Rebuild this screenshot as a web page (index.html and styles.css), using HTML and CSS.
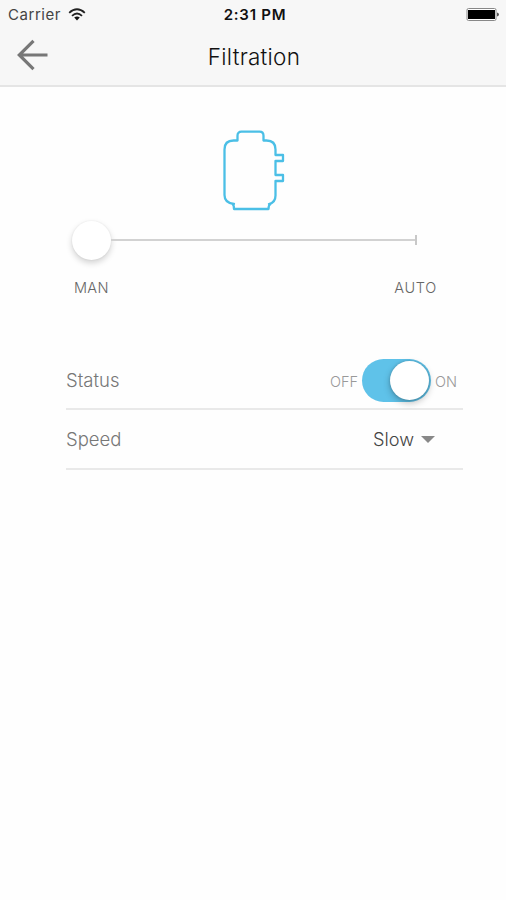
FILE: index.html
```html
<!DOCTYPE html>
<html lang="en">
<head>
<meta charset="utf-8">
<title>Filtration</title>
<link rel="stylesheet" href="styles.css">
</head>
<body>
<header class="header">
  <div class="status-bar">
    <div class="carrier"><span class="carrier-name">Carrier</span>
      <svg class="wifi" width="18" height="13" viewBox="0 0 18 13" fill="none" stroke="#222" stroke-width="1.8"><path d="M1.2 4.8Q9-2.2 16.8 4.8M4 7.8Q9 3.3 14 7.8"/><path d="M6.2 9.6Q9 7.4 11.8 9.6L9 12.4Z" fill="#111" stroke="none"/></svg>
    </div>
    <div class="clock">2:31 PM</div>
    <svg class="battery" width="34" height="13" viewBox="0 0 34 13"><rect x="1" y=".5" width="29" height="12" rx="1.5" fill="#fff" stroke="#888"/><rect x="2" y="2" width="27" height="9" fill="#000"/><path d="M31 4.500q2 .3 2 2t-2 2z" fill="#555"/></svg>
  </div>
  <div class="nav-bar">
    <svg class="back" width="32" height="32" viewBox="0 0 32 32" fill="none" stroke="#777" stroke-width="3.2"><path d="M16.500 1.800 2.300 16 16.500 30.200M2.300 16H30.500"/></svg>
    <h1 class="title">Filtration</h1>
  </div>
</header>
<main class="content">
  <svg class="filter-icon" width="64" height="82" viewBox="0 0 64 82" fill="none" stroke="#4bbfe6" stroke-width="2.3" stroke-linejoin="round"><path d="M15.500 10.500V5.700q0-4 4-4h18q4 0 4 4v4.800h3q9 0 9 9v5.500h7.500v6h-7.500v14h7.500v6h-7.500v14.500q0 7-6.500 8.500l1.500 0q-2 1-2 5H12q0-4-1.500-5l1.500 0q-9.500-1-9.500-9V19.500q0-9 9-9z"/></svg>
  <div class="slider">
    <div class="slider-thumb"></div>
    <div class="slider-track"></div>
    <div class="slider-end"></div>
  </div>
  <div class="slider-labels"><span>MAN</span><span class="auto">AUTO</span></div>
  <div class="settings">
    <div class="row">
      <span class="label">Status</span>
      <div class="toggle"><span class="state">OFF</span><div class="switch"><div class="knob"></div></div><span class="state">ON</span></div>
    </div>
    <div class="row">
      <span class="label speed">Speed</span>
      <div class="select"><span class="value">Slow</span><span class="caret"></span></div>
    </div>
  </div>
</main>
</body>
</html>
```
FILE: styles.css
```css
* { box-sizing: border-box; }
body { margin: 0; height: 900px; background: #fefefe; font-family: Inter, sans-serif; font-weight: 300; color: #222; overflow: hidden; }
svg { display: block; flex: none; }
.header { height: 87px; background: #f7f7f7; border-bottom: 2px solid #e5e5e5; }
.status-bar { height: 28px; display: grid; grid-template-columns: 1fr auto 1fr; align-items: center; padding: 0 6px 0 8px; font-size: 15px; line-height: 28px; }
.carrier { display: flex; align-items: center; gap: 7px; }
.carrier-name { font-weight: 400; color: #444; letter-spacing: .55px; padding-top: 1px; }
.clock { font-weight: 600; color: #111; letter-spacing: .75px; padding: 1px 0 0 2px; }
.battery { justify-self: end; }
.nav-bar { height: 57px; display: grid; grid-template-columns: 32px 1fr 32px; align-items: center; padding: 0 15px 3px 17px; }
.title { margin: 4px 0 0; text-align: center; font-size: 22.5px; line-height: 28px; font-weight: 300; color: #111; letter-spacing: .25px; }
.content { padding: 43px 43px 0 66px; }
.filter-icon { margin-left: 156px; }
.slider { display: flex; align-items: center; height: 40px; margin: 8px 46px 0 6px; }
.slider-thumb { width: 39px; height: 39px; border-radius: 50%; background: #fff; box-shadow: 0 3px 6px rgba(0,0,0,.18), 0 0 2px rgba(0,0,0,.07); }
.slider-track { flex: 1; height: 2px; background: #d2d2d2; }
.slider-end { width: 2px; height: 10px; background: #c8c8c8; }
.slider-labels { display: flex; justify-content: space-between; margin: 18px 26px 0 8px; font-size: 14.5px; line-height: 20px; color: #666; letter-spacing: .3px; }
.auto { letter-spacing: .7px; }
.settings { margin-top: 52px; }
.row { height: 60px; display: flex; align-items: center; justify-content: space-between; border-bottom: 2px solid #e9e9e9; }
.label { font-size: 18.5px; color: #777; padding-top: 1px; }
.label, .value { line-height: 24px; }
.label.speed { padding-top: 0; }
.toggle { display: flex; align-items: center; width: 133px; padding-top: 2px; }
.state { font-size: 14.5px; line-height: 20px; color: #999; padding-top: 3px; }
.switch { width: 69px; height: 43px; margin: 0 4px 0 auto; padding: 2px; border-radius: 22px; background: #5fc2e9; display: flex; justify-content: flex-end; }
.knob { width: 39px; height: 39px; border-radius: 50%; background: #fff; box-shadow: 0 3px 7px rgba(0,0,0,.25), 0 0 3px rgba(0,0,0,.2); }
.toggle .state:last-child { width: 28px; }
.select { display: flex; align-items: center; gap: 7px; margin-right: 28px; }
.value { font-size: 18.2px; color: #444; }
.caret { border: 7px solid transparent; border-top: 7px solid #888; border-bottom: 0; }
```
